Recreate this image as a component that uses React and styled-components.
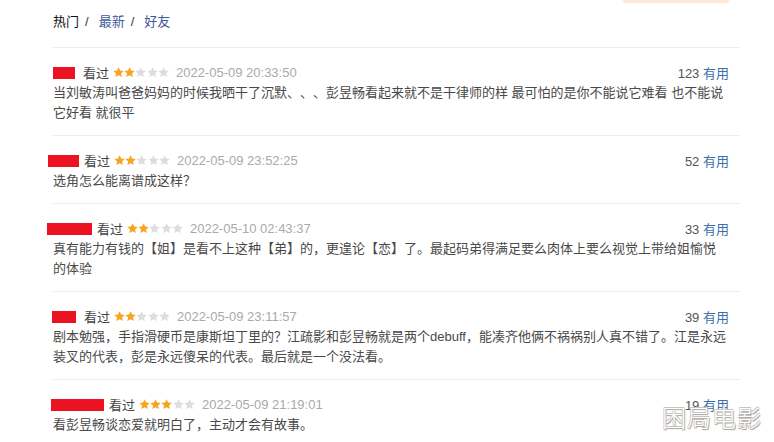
import React from "react";
import styled, { createGlobalStyle } from "styled-components";

const Global = createGlobalStyle`
  html, body { margin: 0; padding: 0; background: #fff; }
  body {
    font-family: "Liberation Sans", "Noto Sans CJK SC", Arial, sans-serif;
    font-size: 13px;
    color: #494949;
    text-spacing-trim: space-all;
  }
`;

const Page = styled.div`
  position: relative;
  width: 774px;
  height: 442px;
  overflow: hidden;
  background: #fff;
`;

const Column = styled.div`
  margin: 0 34px 0 53px;
`;

const TopBar = styled.div`
  height: 3px;
  display: flex;
  justify-content: flex-end;
  padding-right: 11px;
`;

const PeachTab = styled.div`
  width: 106px;
  height: 3px;
  background: #fde8d9;
  border-radius: 0 0 3px 3px;
`;

const Tabs = styled.div`
  display: flex;
  align-items: center;
  gap: 6px;
  line-height: 20px;
  padding: 9px 0 15px;
  border-bottom: 1px solid #ececec;
`;

const Tab = styled.span`
  color: ${(p) => (p.$active ? "#111" : "#3f5a9a")};
`;

const Slash = styled.span`
  color: #333;
  margin-right: 4px;
`;

const Comment = styled.div`
  padding: 14px 0 12px;
  border-bottom: 1px solid #ececec;
`;

const Head = styled.div`
  display: flex;
  align-items: center;
  height: 20px;
  padding-right: 11px;
`;

const Redacted = styled.span`
  display: inline-block;
  width: ${(p) => p.$w}px;
  height: 12px;
  margin-left: ${(p) => p.$shift}px;
  margin-right: ${(p) => p.$gap}px;
  background: #eb1321;
  transform: translateY(1px);
`;

const Watched = styled.span`
  color: #444;
  margin-right: 4px;
`;

const Stars = styled.span`
  display: inline-flex;
  margin-right: 7px;
`;

const DateText = styled.span`
  color: #aaa;
`;

const Votes = styled.span`
  margin-left: auto;
  color: #555;
`;

const Useful = styled.span`
  color: #3b6fae;
`;

const Body = styled.p`
  margin: 1px 0 0;
  line-height: 20px;
  color: #494949;
  padding-right: 11.5px;
  text-spacing-trim: space-all;
`;

const Watermark = styled.div`
  position: absolute;
  right: 12px;
  bottom: 8px;
  font-family: "Noto Sans CJK SC", sans-serif;
  font-size: 24px;
  font-weight: 300;
  letter-spacing: 1px;
  color: #fff;
  text-shadow: -0.6px -0.6px 0 #c4c4c4, 0.6px -0.6px 0 #c4c4c4,
    -0.6px 0.6px 0 #b0b0b0, 1px 1px 1px #8e8e8e;
`;

const Star = ({ on }) => (
  <svg width="11.2" height="11" viewBox="0 0 24 24">
    <path
      d="M12 0.5l3.4 7.3 8 .8-6 5.4 1.8 8L12 17.9 4.8 22l1.8-8-6-5.4 8-.8z"
      fill={on ? "#f7a51e" : "#dddddd"}
    />
  </svg>
);

const data = [
  {
    w: 22, shift: 0, gap: 8, stars: 2, date: "2022-05-09 20:33:50", votes: 123,
    text: "当刘敏涛叫爸爸妈妈的时候我晒干了沉默、、、彭昱畅看起来就不是干律师的样 最可怕的是你不能说它难看 也不能说它好看 就很平",
  },
  {
    w: 31, shift: -5, gap: 5, stars: 2, date: "2022-05-09 23:52:25", votes: 52,
    text: "选角怎么能离谱成这样？",
  },
  {
    w: 45, shift: -6, gap: 5, stars: 2, date: "2022-05-10 02:43:37", votes: 33,
    text: "真有能力有钱的【姐】是看不上这种【弟】的，更遑论【恋】了。最起码弟得满足要么肉体上要么视觉上带给姐愉悦的体验",
  },
  {
    w: 24, shift: -1, gap: 8, stars: 2, date: "2022-05-09 23:11:57", votes: 39,
    text: "剧本勉强，手指滑硬币是康斯坦丁里的？江疏影和彭昱畅就是两个debuff，能凑齐他俩不祸祸别人真不错了。江是永远装叉的代表，彭是永远傻呆的代表。最后就是一个没法看。",
  },
  {
    w: 53, shift: -2, gap: 5, stars: 3, date: "2022-05-09 21:19:01", votes: 19,
    text: "看彭昱畅谈恋爱就明白了，主动才会有故事。",
  },
];

export default function App() {
  return (
    <Page>
      <Global />
      <Column>
        <TopBar>
          <PeachTab />
        </TopBar>
        <Tabs>
          <Tab $active>热门</Tab>
          <Slash>/</Slash>
          <Tab>最新</Tab>
          <Slash>/</Slash>
          <Tab>好友</Tab>
        </Tabs>
        {data.map((c, i) => (
          <Comment key={i}>
            <Head>
              <Redacted $w={c.w} $shift={c.shift} $gap={c.gap} />
              <Watched>看过</Watched>
              <Stars>
                {[0, 1, 2, 3, 4].map((k) => (
                  <Star key={k} on={k < c.stars} />
                ))}
              </Stars>
              <DateText>{c.date}</DateText>
              <Votes>
                {c.votes} <Useful>有用</Useful>
              </Votes>
            </Head>
            <Body>{c.text}</Body>
          </Comment>
        ))}
      </Column>
      <Watermark>困局电影</Watermark>
    </Page>
  );
}
